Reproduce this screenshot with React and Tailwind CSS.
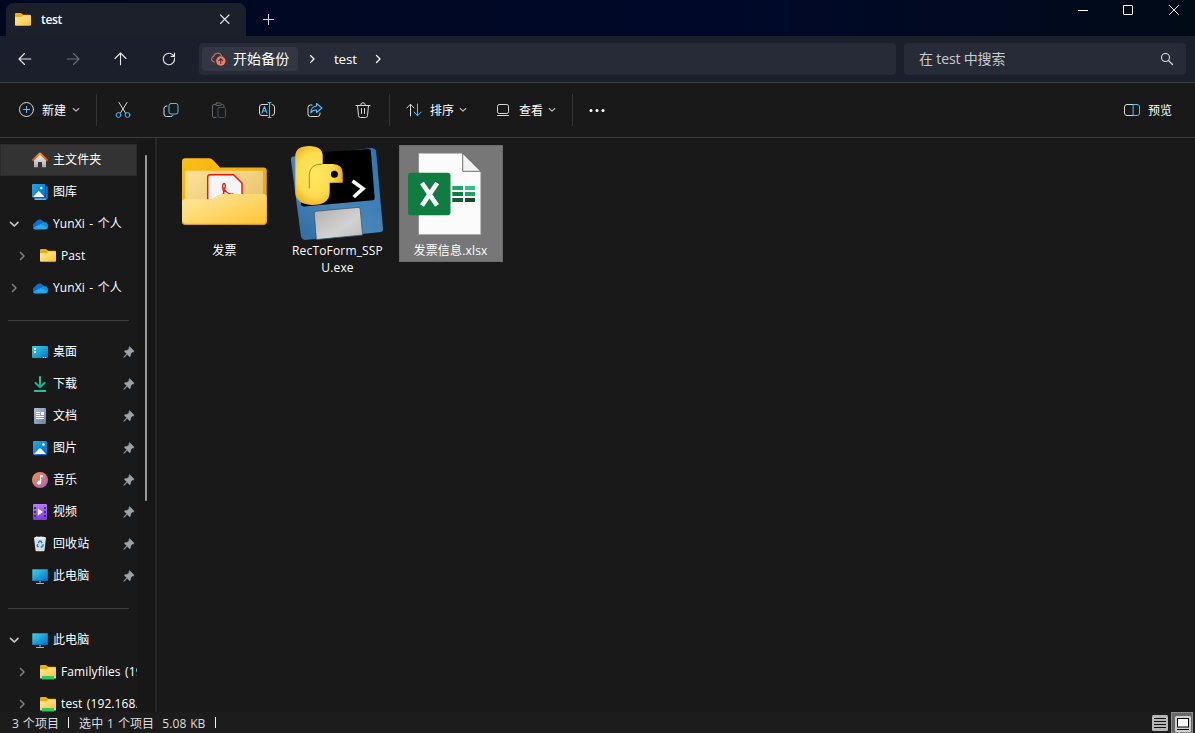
import React from 'react';

const Svg = ({ w = 16, h = w, className = '', children }) => (
  <svg
    width={w}
    height={h}
    viewBox={`0 0 ${w} ${h}`}
    fill="none"
    strokeLinecap="round"
    strokeLinejoin="round"
    className={`shrink-0 ${className}`}
  >
    {children}
  </svg>
);

/* ---------- shared gradients ---------- */
const Defs = () => (
  <svg width="0" height="0" className="absolute">
    <defs>
      <linearGradient id="folder" x1="0" y1="0" x2="1" y2="1">
        <stop offset="0" stopColor="#ffe9a6" />
        <stop offset="1" stopColor="#fdc42f" />
      </linearGradient>
      <linearGradient id="folderBack" x1="0" y1="0" x2="1" y2="1">
        <stop offset="0" stopColor="#ffbd14" />
        <stop offset="1" stopColor="#dfa21c" />
      </linearGradient>
      <linearGradient id="sheet" x1="0" y1="0" x2="1" y2="1">
        <stop offset="0" stopColor="#fde29a" />
        <stop offset="1" stopColor="#e6bd61" />
      </linearGradient>
      <linearGradient id="screen" x1="0" y1="0" x2="1" y2="1">
        <stop offset="0" stopColor="#35d5e4" />
        <stop offset="1" stopColor="#0b6fc8" />
      </linearGradient>
      <linearGradient id="picture" x1="0" y1="0" x2="1" y2="1">
        <stop offset="0" stopColor="#24a9ea" />
        <stop offset="1" stopColor="#0868c6" />
      </linearGradient>
      <linearGradient id="download" gradientUnits="userSpaceOnUse" x1="0" y1="0" x2="0" y2="12">
        <stop offset="0" stopColor="#3ccb7c" />
        <stop offset="1" stopColor="#12a795" />
      </linearGradient>
      <linearGradient id="doc" x1="0" y1="0" x2="1" y2="1">
        <stop offset="0" stopColor="#b4c4d4" />
        <stop offset="1" stopColor="#66829f" />
      </linearGradient>
      <linearGradient id="music" x1="0" y1="0" x2="1" y2="1">
        <stop offset="0" stopColor="#fb8f45" />
        <stop offset="1" stopColor="#a062c0" />
      </linearGradient>
      <linearGradient id="video" x1="0" y1="0" x2="0" y2="1">
        <stop offset="0" stopColor="#b47cf2" />
        <stop offset="1" stopColor="#7d3ae0" />
      </linearGradient>
      <linearGradient id="roof" x1="0" y1="0" x2="0" y2="1">
        <stop offset="0" stopColor="#ff9a1f" />
        <stop offset="1" stopColor="#d94a1c" />
      </linearGradient>
      <linearGradient id="wall" x1="0" y1="0" x2="0" y2="1">
        <stop offset="0" stopColor="#f2f2f2" />
        <stop offset="1" stopColor="#a9a9a9" />
      </linearGradient>
      <linearGradient id="floppy" x1="0" y1="1" x2="1" y2="0">
        <stop offset="0" stopColor="#2c6ba0" />
        <stop offset="0.45" stopColor="#4a85b6" />
        <stop offset="1" stopColor="#2676b4" />
      </linearGradient>
      <linearGradient id="metal" x1="0" y1="0" x2="1" y2="1">
        <stop offset="0" stopColor="#aeaeae" />
        <stop offset="0.6" stopColor="#d2d2d2" />
        <stop offset="1" stopColor="#bcbcbc" />
      </linearGradient>
      <radialGradient id="snake" cx="0.42" cy="0.48" r="0.62">
        <stop offset="0" stopColor="#ffe862" />
        <stop offset="0.6" stopColor="#fddc4e" />
        <stop offset="1" stopColor="#e9a51a" />
      </radialGradient>
    </defs>
  </svg>
);

/* ---------- 16px icons ---------- */
const FolderIcon = ({ network }) => (
  <Svg>
    <path d="M0 2Q0 1 1 1H5.500Q6.200 1 6.700 1.500L8.200 2.800H15Q16 2.800 16 3.800V8H0Z" fill="#f5ac08" />
    <path d="M0 6Q0 5 1 5H6.500L8.200 3.600H15Q16 3.600 16 4.600V12.800Q16 13.800 15 13.800H1Q0 13.800 0 12.800Z" fill="url(#folder)" />
    {network && (
      <>
        <path d="M0 12.500H16V14.500H0Z" fill="#b9edb0" />
        <path d="M2 12H14V15.500H2Z" fill="#31c75a" />
      </>
    )}
  </Svg>
);

const HomeIcon = () => (
  <Svg>
    <path d="M2 7L8 2L14 7V14.7Q14 15.3 13.4 15.3H10V10H6V15.3H2.600Q2 15.3 2 14.7Z" fill="url(#wall)" />
    <path d="M1 8L8 1.600L15 8" stroke="url(#roof)" strokeWidth="2" />
  </Svg>
);

const GalleryIcon = () => (
  <Svg>
    <path d="M14.800 3V14.700H3.500" stroke="#1178cf" strokeWidth="1.800" />
    <path d="M3 15.200H13.500" stroke="#5fb4ec" strokeWidth="1.400" />
    <rect x="0" y="0" width="13.500" height="13.700" rx="1" fill="url(#picture)" />
    <path d="M1 13L6.300 7.200Q6.800 6.700 7.300 7.200L12.500 13Z" fill="#fff" />
    <circle cx="9.300" cy="4" r="1.200" fill="#fff" />
  </Svg>
);

const CloudIcon = () => (
  <Svg>
    <path d="M3.500 8A4.600 4.600 0 0 1 12.300 6.500L8 11Z" fill="#0f5fb8" />
    <path d="M3.500 6.200A4.700 4.700 0 0 1 9 3.800L12.300 6.500L3.500 13A3.500 3.500 0 0 1 3.500 6.200Z" fill="#0a6ecb" />
    <path d="M8 8L12 6.300A3.700 3.700 0 0 1 15 12.700L8 12Z" fill="#1490df" />
    <path d="M1 12L7.200 8.500Q8.400 8 9.500 8.600L15.600 11.700Q14.800 13.500 12.700 13.500H3.700Q1.800 13.500 1 12Z" fill="#28a8ea" />
  </Svg>
);

const DesktopIcon = () => (
  <Svg>
    <rect x="0" y="2" width="16" height="12" rx="1" fill="url(#screen)" />
    <path d="M2 4H4V6H2ZM2 7H4V9H2Z" fill="#fff" />
    <path d="M11 13H12V14H11ZM13 13H14V14H13Z" fill="#d6efff" />
  </Svg>
);

const DownloadIcon = () => (
  <Svg>
    <path d="M8 1V11M3.500 7L8 11.300L12.500 7" stroke="url(#download)" strokeWidth="2" />
    <path d="M2.700 15H13.300" stroke="#2dbf8a" strokeWidth="1.800" />
  </Svg>
);

const DocIcon = () => (
  <Svg>
    <rect x="2" y="0" width="12" height="16" rx="1" fill="url(#doc)" />
    <path d="M4 4.500H8M4 6.500H8M4 8.500H12M4 10.500H12" stroke="#fff" strokeLinecap="butt" />
    <path d="M9 4H12V7H9Z" fill="#fff" />
  </Svg>
);

const PictureIcon = () => (
  <Svg>
    <rect x="1" y="1" width="14" height="14" rx="1" fill="url(#picture)" />
    <path d="M2 14L7.300 8.500Q8 8 8.700 8.500L14 14Z" fill="#fff" />
    <circle cx="11.500" cy="4.500" r="1.300" fill="#fff" />
  </Svg>
);

const MusicIcon = () => (
  <Svg>
    <circle cx="8" cy="8" r="8" fill="url(#music)" />
    <path d="M8 3H10.700V5.200H9.200V10.500A2 2 0 1 1 8 8.700Z" fill="#fff" />
  </Svg>
);

const VideoIcon = () => (
  <Svg>
    <rect x="1" y="0" width="14" height="16" rx="1" fill="url(#video)" />
    <path d="M3 3V14.500M13 3V14.500" stroke="#4f1fa3" strokeWidth="2" strokeDasharray="2 2" strokeLinecap="butt" />
    <path d="M5.800 4.500L11 8L5.800 11.500Z" fill="#fff" />
  </Svg>
);

const RecycleIcon = () => (
  <Svg>
    <path d="M2 2L4 .8H12L14 2L12.500 14.500Q12.400 15.300 11.500 15.300H4.500Q3.600 15.300 3.500 14.500Z" fill="#dcdddf" />
    <path d="M3 1.500L5 .500L7 1.500L9 .500L11 1.500L13 1L14 2.500H2Z" fill="#fafafa" />
    <path d="M6.200 7L7.500 5.300H9L10 7M10.700 8.300L11 9.500L9.700 11H8.700M6.500 11L5.200 9.800L5.800 8.200" stroke="#1681d6" strokeWidth="1.500" strokeLinecap="butt" />
  </Svg>
);

const ComputerIcon = () => (
  <Svg>
    <path d="M7 12H9V14.500H7Z" fill="#7c8994" />
    <path d="M4 15.500H12" stroke="#aab6c0" strokeLinecap="butt" />
    <rect x="0" y="1" width="16" height="12" rx=".7" fill="#155f9c" />
    <rect x=".5" y="1.500" width="15" height="11" fill="url(#screen)" />
  </Svg>
);

const PinIcon = () => (
  <Svg w={12} className="text-[#98a3ab]">
    <path d="M6.800 .8L11.200 5.200L10.200 6L9.500 5.900L7.600 7.900L7.400 10.200L6.500 10.700L4.200 8.300L1 11.500L.6 11.100L3.700 7.800L1.500 5.500L2 4.600L4.200 4.400L6.200 2.500L6.100 1.700Z" fill="currentColor" stroke="currentColor" strokeWidth=".5" />
  </Svg>
);

const Chevron = ({ dir = 'right', className = '', size = 12, sw = 1.3 }) => (
  <Svg w={size} className={className}>
    {dir === 'right' ? (
      <path d="M4.500 2.500L8 6L4.500 9.500" stroke="currentColor" strokeWidth={sw} />
    ) : (
      <path d={size === 12 ? 'M2.500 4.300L6.300 8L10 4.300' : 'M1.200 2.500L4 5.200L6.800 2.500'} stroke="currentColor" strokeWidth={sw} />
    )}
  </Svg>
);

/* ---------- 96px file icons ---------- */
const BigFolder = () => (
  <Svg w={96}>
    <path d="M5 15.500Q5 12.300 8.200 12.300H32Q34.500 12.300 36.300 14.200L43 21.500H86.500Q89.700 21.500 89.700 24.700V75H5Z" fill="url(#folderBack)" />
    <path d="M8 26Q8 24.700 9.300 24.700H84.700Q86 24.700 86 26V70H8Z" fill="url(#sheet)" />
    <path d="M30.700 70V31.200Q30.700 28.700 33.200 28.700H56.500L65 37V70Z" fill="#f5f5f5" stroke="#fb1505" strokeWidth="1.500" />
    <path d="M47 47C45.500 43 45 38 47 37.500C49.300 37.500 48.300 43 46 48.500M47 42C48 45 51 48.500 56 48" stroke="#e81a10" strokeWidth="1.300" />
    <path d="M5 56Q5 53.200 8 53.200H32Q35 53.200 37.500 51.500L41 49Q43 48 46 48H86.700Q89.700 48 89.700 51V75.500Q89.700 78.700 86.500 78.700H8.200Q5 78.700 5 75.500Z" fill="url(#folder)" />
    <path d="M5.300 75.500Q5.500 78.300 8.200 78.300H86.500Q89.200 78.300 89.400 75.500" stroke="#c9962b" strokeWidth=".8" />
  </Svg>
);

const SnakeDisk = () => (
  <Svg w={96}>
    <path d="M1 14Q1 10.800 3 10.500L82 2Q84.500 1.800 86 4.500L93 83Q93.200 85.600 91 86L15 94Q12.500 94.200 11 91Z" fill="url(#floppy)" />
    <path d="M10 7.500L79 3Q80.600 3 80.800 4.500L84.700 52Q84.700 54 83 54.200L14 60.500Q11 60.500 11 58Z" fill="#000" />
    <path d="M24.300 67.500Q24.300 65.400 26.300 65.200L68 61.400Q70 61.200 70.200 63L72.600 89L26.600 93.500Z" fill="url(#metal)" stroke="#3b5b77" strokeWidth=".8" />
    <path d="M5.300 10Q5.300 0 19 0Q32.700 0 32.700 10V18H43Q52.700 18.500 52.700 27V36.700H39.700V46Q39.700 59 22 59Q5.300 58 5.300 46Z" fill="url(#snake)" />
    <path d="M19.300 42V28Q20 18 32 18" stroke="#9a7414" strokeWidth=".8" />
    <circle cx="44.400" cy="28.200" r="3.500" fill="#000" />
    <path d="M62.500 35L73 42.600L63.700 51" stroke="#fff" strokeWidth="3.600" strokeLinecap="butt" strokeLinejoin="miter" />
  </Svg>
);

const ExcelIcon = () => (
  <Svg w={96} className="relative left-[0.5px]">
    <path d="M16 7.300H59.500L77.700 25.500V88.500H16Z" fill="#fbfbfb" stroke="#a5a5a5" strokeWidth=".7" />
    <path d="M59.700 7.500V25.300H77.500Z" fill="#f3f3f3" stroke="#5e5e5e" strokeWidth=".9" />
    <path d="M49.300 40H60V44H49.300Z" fill="#21a366" />
    <path d="M62 40H72V44H62Z" fill="#33c481" />
    <path d="M49.300 46H60V50H49.300Z" fill="#107c41" />
    <path d="M62 46H72V50H62Z" fill="#21a366" />
    <path d="M49.300 52H60V56H49.300Z" fill="#185c37" />
    <path d="M62 52H72V56H62Z" fill="#134a2c" />
    <rect x="5" y="26.700" width="42.500" height="42.500" rx="3" fill="#107c41" />
    <path d="M19 37L34 59.500M34.200 37L19 59.500" stroke="#fff" strokeWidth="4.600" strokeLinecap="butt" />
  </Svg>
);

/* ---------- window chrome ---------- */
const TitleBar = () => (
  <div className="flex h-9 shrink-0 items-start bg-linear-to-r from-[#000820] via-[#00082a] via-60% to-[#010a17]">
    <div className="ml-1.5 mt-[3px] flex h-[33px] w-[240px] items-center rounded-t-lg bg-[#1b202b] pl-[9px] pr-4">
      <FolderIcon />
      <span className="ml-2.5 flex-1 pt-px text-[12px] font-semibold tracking-[-0.35px]">test</span>
      <Svg w={11} className="text-[#e6e6e6]">
        <path d="M1.500 1L10 9.500M10 1L1.500 9.500" stroke="currentColor" strokeWidth="1.100" />
      </Svg>
    </div>
    <Svg w={12} className="ml-[17px] mt-[13px]">
      <path d="M5.500 1.500V11.500M.5 6.500H10.500" stroke="#ddd" strokeWidth="1" />
    </Svg>
    <div className="ml-auto mr-[15px] mt-[5px] flex gap-[35px]">
      <Svg w={11}><path d="M1 5.500H11" stroke="#fff" strokeLinecap="butt" /></Svg>
      <Svg w={11}><rect x=".5" y=".5" width="9" height="9" rx=".5" stroke="#fff" /></Svg>
      <Svg w={11}><path d="M.5 .5L9.500 9.500M9.500 .5L.5 9.500" stroke="#f0f0f0" /></Svg>
    </div>
  </div>
);

const NavBar = () => (
  <div className="flex h-[47px] shrink-0 items-center border-b border-[#3d3d3d] bg-[#1a1f2b] pl-[17px] pr-[9px]">
    <div className="flex w-[182px] gap-8 text-[#e8e8e8]">
      <Svg><path d="M7.500 2.500L2 8L7.500 13.500M2 8H13.800" stroke="currentColor" strokeWidth="1.100" /></Svg>
      <Svg className="text-[#6a6e78]"><path d="M8.500 2.500L14 8L8.500 13.500M14 8H2.200" stroke="currentColor" strokeWidth="1.100" /></Svg>
      <Svg><path d="M2 7.500L7.500 2L13 7.500M7.500 2V13.800" stroke="currentColor" strokeWidth="1.100" /></Svg>
      <Svg><path d="M13.500 7A5.700 5.700 0 1 1 11.600 3.700L13.500 5.400M13.500 2V5.400H10.200" stroke="currentColor" strokeWidth="1.100" /></Svg>
    </div>
    <div className="flex h-8 w-[697px] items-center rounded bg-[#262b37] pl-[3px]">
      <div className="flex h-6 w-24 items-center rounded bg-[#333743] pl-2">
        <Svg>
          <path d="M4.500 11H4A3 3 0 0 1 3.700 5.200A4.200 4.200 0 0 1 11.500 4.500" stroke="#cf6e5c" strokeWidth="1.100" />
          <circle cx="10.800" cy="10" r="4.700" fill="#ef8068" />
          <path d="M10.800 12.500V8M8.800 9.700L10.800 7.700L12.800 9.700" stroke="#443238" strokeWidth="1.100" />
        </Svg>
        <span className="ml-[7px] pb-0.5 text-[14px] tracking-[0.1px]">开始备份</span>
      </div>
      <Chevron className="ml-2" />
      <span className="ml-4 w-[23px] text-[13.500px] tracking-[-0.2px]">test</span>
      <Chevron className="ml-[15px]" />
    </div>
    <div className="ml-2 flex h-8 flex-1 items-center justify-between rounded bg-[#262b37] pl-[15px] pr-3 text-[#c9cace]">
      <span className="pb-0.5 text-[14px] tracking-[-0.15px]">在 test 中搜索</span>
      <Svg w={14}>
        <circle cx="5.500" cy="5.500" r="4" stroke="#ddd" strokeWidth="1.100" />
        <path d="M8.600 8.600L12.500 12.500" stroke="#ddd" strokeWidth="1.200" />
      </Svg>
    </div>
  </div>
);

const Divider = () => <div className="h-8 w-px bg-[#333]" />;

const ToolBar = () => (
  <div className="flex h-[55px] shrink-0 items-center border-b border-[#3d3d3d] bg-[#191919] pl-[19px] pr-[23px] text-[12px] text-[#d8d8d8]">
    <Svg>
      <circle cx="7.500" cy="7.500" r="7" stroke="currentColor" />
      <path d="M7.500 4.500V10.500M4.500 7.500H10.500" stroke="#4cc2ff" />
    </Svg>
    <span className="ml-[7px] pt-0.5 text-white">新建</span>
    <Chevron dir="down" size={8} sw={1.1} className="ml-1.5 mr-4 text-[#bbb]" />
    <Divider />
    <div className="ml-[18px] mr-[18px] flex gap-8">
      <Svg>
        <path d="M4 .5L10.500 11M12 .5L5.500 11" stroke="currentColor" />
        <circle cx="3.500" cy="13" r="2.400" stroke="#4cc2ff" />
        <circle cx="12.500" cy="13" r="2.400" stroke="#4cc2ff" />
      </Svg>
      <Svg>
        <rect x="6" y="1.500" width="9" height="10.500" rx="2" stroke="#4cc2ff" />
        <path d="M4 4H3Q1 4.500 1 6.500V12Q1 14.500 3.500 14.500H7.500Q9.500 14.500 10 13.500" stroke="currentColor" />
      </Svg>
      <Svg className="text-[#666]">
        <path d="M5 2.500H3Q1.500 2.500 1.500 4V14Q1.500 15.500 3 15.500H5M10 2.500H11.500Q13 2.500 13 4V4.500" stroke="currentColor" />
        <rect x="4.700" y="1" width="5.500" height="2.500" rx="1" stroke="currentColor" />
        <rect x="7" y="5.500" width="7.500" height="10" rx="1.200" stroke="#2f596e" />
      </Svg>
      <Svg w={17} className="-mr-px">
        <path d="M8.500 2.500H3Q.5 2.500 .5 5V11Q.5 13.500 3 13.500H8.500M13 2.500Q15.500 2.500 15.500 5V11Q15.500 13.500 13 13.500" stroke="currentColor" />
        <path d="M9 .5H12M9 15.500H12M10.500 .5V15.500" stroke="#4cc2ff" strokeWidth="1.100" />
        <path d="M3 11L5.500 4.500L8 11M4 9H7" stroke="#4cc2ff" strokeWidth="1.100" />
      </Svg>
      <Svg>
        <path d="M5 3H3.500Q1 3 1 5.500V12Q1 14.500 3.500 14.500H10.500Q13 14.500 13 12V11" stroke="currentColor" />
        <path d="M9.500 1.500L15 6L9.500 10.500V8Q5.500 7.700 3.800 11Q4 4.500 9.500 4Z" stroke="#4cc2ff" strokeWidth="1.100" />
      </Svg>
      <Svg>
        <path d="M1 3.500H15M5.700 3.200Q5.700 .7 8 .7T10.300 3.200M2.500 3.500L3.500 13.500Q3.700 15.500 5.500 15.500H10.500Q12.300 15.500 12.500 13.500L13.500 3.500M6.500 6.500V11.500M9.500 6.500V11.500" stroke="currentColor" />
      </Svg>
    </div>
    <Divider />
    <Svg className="ml-4">
      <path d="M4.500 14V2.500M.8 6L4.500 2.200L8 6" stroke="currentColor" />
      <path d="M11.500 2V13.500M8 10L11.500 13.700L15.200 10" stroke="#4cc2ff" />
    </Svg>
    <span className="ml-2 pt-0.5 text-white">排序</span>
    <Chevron dir="down" size={8} sw={1.1} className="ml-[5px] text-[#bbb]" />
    <Svg className="ml-[29px]">
      <rect x="1.500" y="2.500" width="11" height="9" rx="1.800" stroke="currentColor" />
      <path d="M1.500 13.500H12.500" stroke="currentColor" />
    </Svg>
    <span className="ml-[7px] pt-0.5 text-white">查看</span>
    <Chevron dir="down" size={8} sw={1.1} className="ml-[5px] mr-4 text-[#bbb]" />
    <Divider />
    <Svg className="ml-4">
      <circle cx="2" cy="8.500" r="1.500" fill="#fff" />
      <circle cx="8" cy="8.500" r="1.500" fill="#fff" />
      <circle cx="14" cy="8.500" r="1.500" fill="#fff" />
    </Svg>
    <Svg className="ml-auto">
      <path d="M9.500 2.500H3Q.5 2.500 .5 5V11Q.5 13.500 3 13.500H9.500" stroke="currentColor" />
      <path d="M9.500 2.500H13Q15.500 2.500 15.500 5V11Q15.500 13.500 13 13.500H9.500Z" stroke="#4cc2ff" />
    </Svg>
    <span className="ml-2 pt-0.5 text-white">预览</span>
  </div>
);

/* ---------- sidebar ---------- */
const rows = [
  { icon: <HomeIcon />, label: '主文件夹', active: true },
  { icon: <GalleryIcon />, label: '图库' },
  { icon: <CloudIcon />, label: 'YunXi - 个人', arrow: 'down' },
  { icon: <FolderIcon />, label: 'Past', arrow: 'right', nested: true },
  { icon: <CloudIcon />, label: 'YunXi - 个人', arrow: 'right' },
  null,
  { icon: <DesktopIcon />, label: '桌面', pin: true },
  { icon: <DownloadIcon />, label: '下载', pin: true },
  { icon: <DocIcon />, label: '文档', pin: true },
  { icon: <PictureIcon />, label: '图片', pin: true },
  { icon: <MusicIcon />, label: '音乐', pin: true },
  { icon: <VideoIcon />, label: '视频', pin: true },
  { icon: <RecycleIcon />, label: '回收站', pin: true },
  { icon: <ComputerIcon />, label: '此电脑', pin: true },
  null,
  { icon: <ComputerIcon />, label: '此电脑', arrow: 'down' },
  { icon: <FolderIcon network />, label: 'Familyfiles (19', arrow: 'right', nested: true },
  { icon: <FolderIcon network />, label: 'test (192.168.', arrow: 'right', nested: true },
];

const SideRow = ({ row }) => {
  if (!row) {
    return (
      <div className="flex h-8 shrink-0 items-center pl-2 pr-2">
        <div className="h-px w-full bg-[#3c3c3c]" />
      </div>
    );
  }
  return (
    <div
      className={`flex h-8 shrink-0 items-center border ${
        row.active ? 'border-[#2b2b2b] bg-[#333]' : 'border-transparent'
      } ${row.nested ? 'pl-[15px]' : 'pl-[7px]'}`}
    >
      <span className="w-6 shrink-0">
        {row.arrow && (
          <Chevron
            dir={row.arrow}
            sw={1.7}
            className={row.arrow === 'down' ? 'text-[#c8c8c8]' : 'text-[#7a7a7a]'}
          />
        )}
      </span>
      {row.icon}
      <span className="ml-[5px] flex-1 whitespace-nowrap">{row.label}</span>
      {row.pin && <span className="mr-px"><PinIcon /></span>}
    </div>
  );
};

const Sidebar = () => (
  <div className="flex w-[158px] shrink-0 overflow-hidden bg-[#171717]">
    <div className="flex w-[137px] shrink-0 flex-col overflow-hidden bg-[#191919] pt-1.5 text-[12px] tracking-[0.1px] [word-spacing:1.2px]">
      {rows.map((row, i) => (
        <SideRow key={i} row={row} />
      ))}
    </div>
    <div className="ml-2 mt-[17px] h-[346px] w-[2px] rounded bg-[#9a9a9a]" />
    <div className="ml-2 w-[2px] bg-[#262626]" />
  </div>
);

/* ---------- file list ---------- */
const File = ({ icon, label, selected }) => (
  <div
    className={`flex w-26 flex-col items-center border pb-0.5 ${
      selected ? 'border-[#6c6c6c] bg-[#777]' : 'border-transparent'
    }`}
  >
    {icon}
    <span className="whitespace-pre-line text-center text-[12px] leading-[17px] tracking-[0.17px]">{label}</span>
  </div>
);

const FileArea = () => (
  <div className="flex flex-1 items-start gap-[9px] bg-[#191919] pl-[14.5px] pt-[6.5px]">
    <File icon={<BigFolder />} label="发票" />
    <File icon={<SnakeDisk />} label={'RecToForm_SSP\nU.exe'} />
    <File icon={<ExcelIcon />} label="发票信息.xlsx" selected />
  </div>
);

const StatusBar = () => (
  <div className="flex h-[21px] shrink-0 items-center bg-[#1c1c1c] pl-3 text-[12px] tracking-[0.1px] text-[#dedede] [word-spacing:0.6px]">
    <span className="pt-0.5">3 个项目</span>
    <div className="ml-[9px] h-[11px] w-px bg-[#f0f0f0]" />
    <span className="ml-[10px] pt-0.5">选中 1 个项目</span>
    <span className="ml-2 pt-0.5">5.08 KB</span>
    <div className="ml-[10px] h-[11px] w-px bg-[#f0f0f0]" />
    <Svg className="ml-auto mt-px">
      <rect width="16" height="16" rx="1.500" fill="#b5b5b5" />
      <path d="M2 3.500H14M2 6.500H14M2 9.500H14M2 12.500H14" stroke="#111" strokeLinecap="butt" />
    </Svg>
    <div className="ml-[3px] mr-[2px] flex h-[21px] w-[22px] items-center justify-center border border-[#8b8b8b] bg-[#686868] pl-px pt-0.5">
      <Svg>
        <rect width="16" height="16" rx="1.500" fill="#cfcfcf" />
        <rect x="2.500" y="2.500" width="11" height="8.500" fill="#fff" stroke="#000" strokeLinejoin="miter" />
        <path d="M2 13.500H14" stroke="#000" strokeLinecap="butt" />
      </Svg>
    </div>
  </div>
);

export default function App() {
  return (
    <div className="flex h-screen w-full flex-col overflow-hidden bg-[#191919] font-['Open_Sans','Noto_Sans_CJK_SC',sans-serif] text-white">
      <Defs />
      <TitleBar />
      <NavBar />
      <ToolBar />
      <div className="flex min-h-0 flex-1">
        <Sidebar />
        <FileArea />
      </div>
      <StatusBar />
    </div>
  );
}
